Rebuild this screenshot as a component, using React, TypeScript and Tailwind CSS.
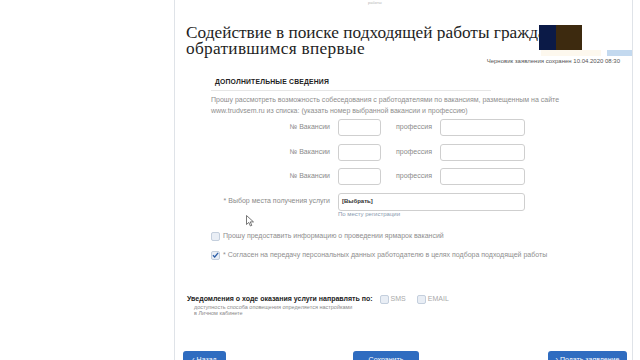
import React from "react";

const sans = { fontFamily: '"Liberation Sans", Arial, sans-serif' } as const;

function Box({ checked = false }: { checked?: boolean }) {
  return (
    <span className="inline-flex h-[9px] w-[9px] shrink-0 items-center justify-center rounded-[2px] border border-[#c4cfdd] bg-[#e9eef5]">
      {checked && (
        <svg width="8" height="8" viewBox="0 0 8 8">
          <path d="M1 4.2 L3.1 6.2 L7 1.6" fill="none" stroke="#2d5fa8" strokeWidth="1.5" />
        </svg>
      )}
    </span>
  );
}

function VacRow() {
  return (
    <div className="flex h-[17px] items-center whitespace-nowrap">
      <div className="w-[119px] text-right text-[7px] text-[#8a8a8a]">№ Вакансии</div>
      <div className="ml-[8px] h-[17px] w-[43px] rounded-[3px] border border-[#cfcfcf] bg-white" />
      <div className="ml-[15px] w-[44px] text-[7px] text-[#8a8a8a]">профессия</div>
      <div className="h-[17px] w-[85px] rounded-[3px] border border-[#cfcfcf] bg-white" />
    </div>
  );
}

export default function App() {
  return (
    <div className="relative flex h-[360px] w-[640px] overflow-hidden bg-white" style={sans}>
      <div className="w-[174px] shrink-0" />
      <div className="relative flex w-[459px] shrink-0 flex-col border-x border-[#dfe3e8]">
        <div className="h-[8px] pl-[193px] text-[4px] leading-[5px] text-[#b5b5b5]">работы</div>
        <div
          className="mt-[19.5px] whitespace-nowrap pl-[11px] text-[17.3px] leading-[16px] text-[#1e1e1e]"
          style={{ fontFamily: '"Liberation Serif", "DejaVu Serif", serif' }}
        >
          <div className="w-[353px] overflow-hidden">Содействие в поиске подходящей работы гражданам,</div>
          <div className="tracking-[0.3px]">обратившимся впервые</div>
        </div>
        <div className="pr-[12px] text-right text-[6px] leading-[8px] text-[#555]">
          Черновик заявления сохранен 10.04.2020 08:30
        </div>
        <div className="ml-[36px] mt-[12px] w-[280px] whitespace-nowrap border-b border-[#e6e6e6] pb-[3px] pl-[4px] text-[6.8px] font-bold leading-[10px] tracking-[0.2px] text-[#222]">
          ДОПОЛНИТЕЛЬНЫЕ СВЕДЕНИЯ
        </div>
        <div className="ml-[36px] mt-[3px] whitespace-nowrap text-[7px] leading-[11px] text-[#8e8e8e]">
          <div>Прошу рассмотреть возможность собеседования с работодателями по вакансиям, размещенным на сайте</div>
          <div>www.trudvsem.ru из списка: (указать номер выбранной вакансии и профессию)</div>
        </div>
        <div className="ml-[36px] mt-[3.5px] flex flex-col gap-[7.5px]">
          <VacRow />
          <VacRow />
          <VacRow />
          <div className="flex h-[18px] items-center whitespace-nowrap">
            <div className="w-[119px] text-right text-[7px] text-[#8a8a8a]">* Выбор места получения услуги</div>
            <div className="ml-[8px] flex h-[18px] w-[187px] items-center rounded-[3px] border border-[#cfcfcf] bg-white pl-[3px] text-[6px] font-bold text-[#333]">
              [Выбрать]
            </div>
          </div>
        </div>
        <div className="ml-[163px] whitespace-nowrap text-[6px] leading-[6px] text-[#8a9ab0]">По месту регистрации</div>
        <div className="ml-[36px] mt-[15px] flex h-[9px] items-center gap-[3px] whitespace-nowrap text-[7px] text-[#8e8e8e]">
          <Box />
          <span>Прошу предоставить информацию о проведении ярмарок вакансий</span>
        </div>
        <div className="ml-[36px] mt-[10px] flex h-[9px] items-center gap-[3px] whitespace-nowrap text-[7px] text-[#8e8e8e]">
          <Box checked />
          <span>* Согласен на передачу персональных данных работодателю в целях подбора подходящей работы</span>
        </div>
        <div className="ml-[12px] mt-[35px] flex h-[9px] items-center whitespace-nowrap">
          <span className="text-[7px] font-bold text-[#222]">Уведомления о ходе оказания услуги направлять по:</span>
          <span className="ml-[7px] flex items-center gap-[2px] text-[7px] text-[#a9a9a9]">
            <Box />
            SMS
          </span>
          <span className="ml-[11px] flex items-center gap-[2px] text-[7px] text-[#a9a9a9]">
            <Box />
            EMAIL
          </span>
        </div>
        <div className="ml-[19px] whitespace-nowrap text-[5.5px] leading-[6px] text-[#8a8a8a]">
          <div>доступность способа оповещения определяется настройками</div>
          <div>в Личном кабинете</div>
        </div>
        <div className="mt-[35.5px] flex items-start">
          <div className="ml-[8px] h-[14px] w-[43px] rounded-[3px] bg-[#2f6cc0] pt-[4px] text-center text-[7px] text-white">‹ Назад</div>
          <div className="ml-[127px] h-[14px] w-[66px] rounded-[3px] bg-[#2f6cc0] pt-[4px] text-center text-[7px] text-white">Сохранить</div>
          <div className="ml-[129px] h-[14px] w-[79px] rounded-[3px] bg-[#2f6cc0] pt-[4px] text-center text-[7px] text-white">› Подать заявление</div>
        </div>

        <div className="absolute left-[364px] top-[25px] flex h-[25px]">
          <div className="w-[17px] bg-[#0b1a47]" />
          <div className="w-[26px] bg-[#3d2a0f]" />
        </div>
        <div className="absolute left-[366px] top-[50px] h-[6px] w-[60px] bg-[#fdf8ee]" />
        <div className="absolute left-[432px] top-[50px] h-[6px] w-[25px] bg-[#c3d9ef]" />
        <svg className="absolute left-[71px] top-[215px]" width="9" height="12" viewBox="0 0 9 12">
          <path d="M0.5 0.5 L0.5 9.5 L2.8 7.4 L4.4 11 L5.8 10.4 L4.3 6.9 L7.5 6.9 Z" fill="white" stroke="#555" strokeWidth="0.8" />
        </svg>
      </div>
    </div>
  );
}
